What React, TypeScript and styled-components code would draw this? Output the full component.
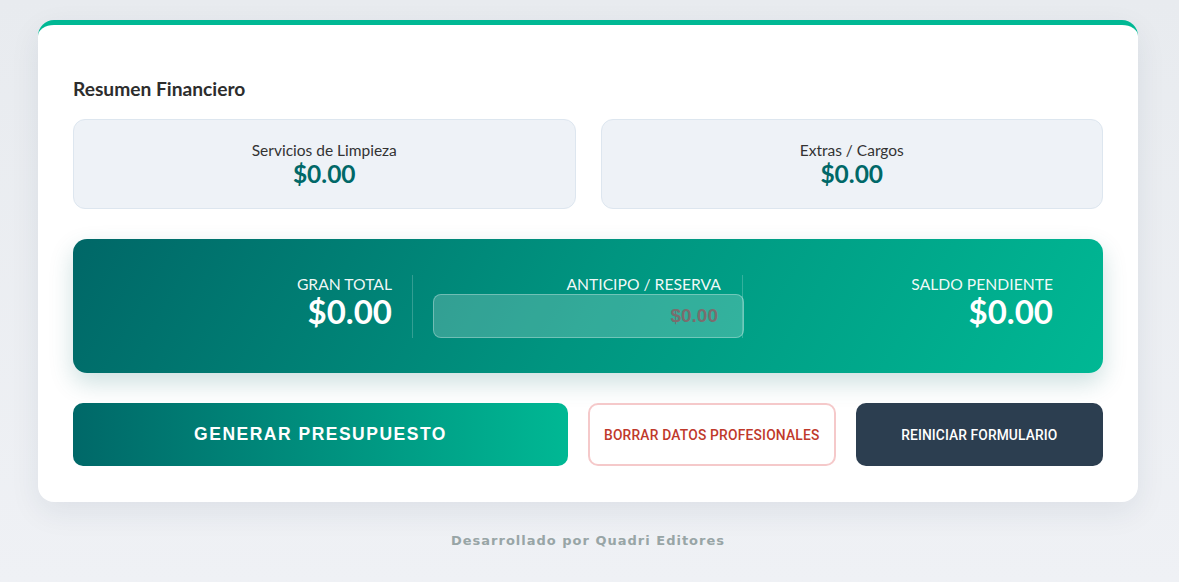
import React from "react";
import styled, { createGlobalStyle } from "styled-components";

const GlobalStyle = createGlobalStyle`
  * { box-sizing: border-box; }
  body {
    margin: 0;
    background: linear-gradient(180deg, #e8ebef 0%, #eff1f5 100%);
    font-family: Lato, "Noto Sans", sans-serif;
    min-height: 582px;
  }
`;

const Page = styled.div`
  padding: 20px 41px 0 38px;
`;

const Card = styled.div`
  background: #ffffff;
  border-top: 5px solid #00b894;
  border-radius: 16px;
  padding: 35px 35px 36px;
  box-shadow: 0 10px 30px rgba(30, 50, 80, 0.08);
`;

const Title = styled.h3`
  margin: 18px 0 19px;
  font-size: 19.2px;
  font-weight: 700;
  color: #2d2d2d;
  line-height: 22px;
`;

const SummaryGrid = styled.div`
  display: grid;
  grid-template-columns: 1fr 1fr;
  gap: 25px;
  margin-bottom: 30px;
`;

const SummaryBox = styled.div`
  background: #eef2f7;
  border: 1px solid #dde6ef;
  border-radius: 12px;
  padding: 21px 20px 20px;
  text-align: center;
`;

const SummaryLabel = styled.div`
  font-size: 15.5px;
  line-height: 18px;
  color: #333333;
`;

const SummaryValue = styled.div`
  font-size: 24.5px;
  line-height: 29px;
  font-weight: 700;
  color: #006868;
`;

const TotalBar = styled.div`
  display: grid;
  grid-template-columns: 1fr 310px 1fr;
  column-gap: 20px;
  align-items: center;
  height: 134px;
  padding: 0 50px;
  border-radius: 14px;
  background: linear-gradient(120deg, #006767 0%, #009580 50%, #00b894 100%);
  box-shadow: 0 10px 25px rgba(0, 100, 100, 0.2);
  color: #ffffff;
  margin-bottom: 30px;
`;

const TotalCol = styled.div<{ $divider?: boolean; $pad?: boolean }>`
  text-align: right;
  height: 63px;
  display: flex;
  flex-direction: column;
  justify-content: flex-start;
  padding-right: ${(p) => (p.$pad ? "20px" : "0")};
  border-right: ${(p) => (p.$divider ? "1px solid rgba(255,255,255,0.2)" : "none")};
`;

const TotalLabel = styled.div<{ $inset?: boolean }>`
  font-size: 15.7px;
  line-height: 18px;
  padding-right: ${(p) => (p.$inset ? "21px" : "0")};
  color: rgba(255, 255, 255, 0.95);
  text-transform: uppercase;
`;

const TotalValue = styled.div`
  font-size: 33px;
  line-height: 37px;
  font-weight: 700;
`;

const AmountInput = styled.input`
  width: 311px;
  height: 44px;
  margin-top: 1px;
  background: rgba(255, 255, 255, 0.2);
  border: 1px solid rgba(255, 255, 255, 0.3);
  border-radius: 8px;
  text-align: right;
  padding: 0 25px;
  font-family: "Liberation Sans", Arial, sans-serif;
  font-size: 19px;
  font-weight: 700;
  color: #ffffff;
  outline: none;
  &::placeholder {
    color: #7b6d6e;
    opacity: 1;
  }
`;

const ButtonRow = styled.div`
  display: grid;
  grid-template-columns: 2fr 1fr 1fr;
  gap: 20px;
`;

const Button = styled.button<{ $variant: "primary" | "danger" | "dark" }>`
  height: 63px;
  border-radius: 10px;
  cursor: pointer;
  text-transform: uppercase;
  font-family: ${(p) =>
    p.$variant === "primary" ? '"Liberation Sans", Arial, sans-serif' : "Roboto, sans-serif"};
  font-weight: ${(p) => (p.$variant === "primary" ? 700 : 500)};
  font-size: ${(p) => (p.$variant === "primary" ? "17.5px" : "13.8px")};
  letter-spacing: ${(p) =>
    p.$variant === "primary" ? "1.5px" : p.$variant === "danger" ? "0.2px" : "0.1px"};
  border: ${(p) => (p.$variant === "danger" ? "2px solid #f5c9ca" : "none")};
  color: ${(p) => (p.$variant === "danger" ? "#c0392b" : "#ffffff")};
  background: ${(p) =>
    p.$variant === "primary"
      ? "linear-gradient(90deg, #006868 0%, #00b894 100%)"
      : p.$variant === "danger"
      ? "#ffffff"
      : "#2c3e50"};
`;

const Footer = styled.footer`
  text-align: center;
  padding-top: 31px;
  font-family: "DejaVu Sans", sans-serif;
  font-weight: 700;
  font-size: 13px;
  letter-spacing: 1px;
  color: #98a5a6;
`;

export default function App() {
  return (
    <>
      <GlobalStyle />
      <Page>
        <Card>
          <Title>Resumen Financiero</Title>
          <SummaryGrid>
            <SummaryBox>
              <SummaryLabel>Servicios de Limpieza</SummaryLabel>
              <SummaryValue>$0.00</SummaryValue>
            </SummaryBox>
            <SummaryBox>
              <SummaryLabel>Extras / Cargos</SummaryLabel>
              <SummaryValue>$0.00</SummaryValue>
            </SummaryBox>
          </SummaryGrid>
          <TotalBar>
            <TotalCol $divider $pad>
              <TotalLabel>Gran Total</TotalLabel>
              <TotalValue>$0.00</TotalValue>
            </TotalCol>
            <TotalCol $divider>
              <TotalLabel $inset>Anticipo / Reserva</TotalLabel>
              <AmountInput placeholder="$0.00" />
            </TotalCol>
            <TotalCol>
              <TotalLabel>Saldo Pendiente</TotalLabel>
              <TotalValue>$0.00</TotalValue>
            </TotalCol>
          </TotalBar>
          <ButtonRow>
            <Button $variant="primary">Generar Presupuesto</Button>
            <Button $variant="danger">Borrar Datos Profesionales</Button>
            <Button $variant="dark">Reiniciar Formulario</Button>
          </ButtonRow>
        </Card>
        <Footer>Desarrollado por Quadri Editores</Footer>
      </Page>
    </>
  );
}
